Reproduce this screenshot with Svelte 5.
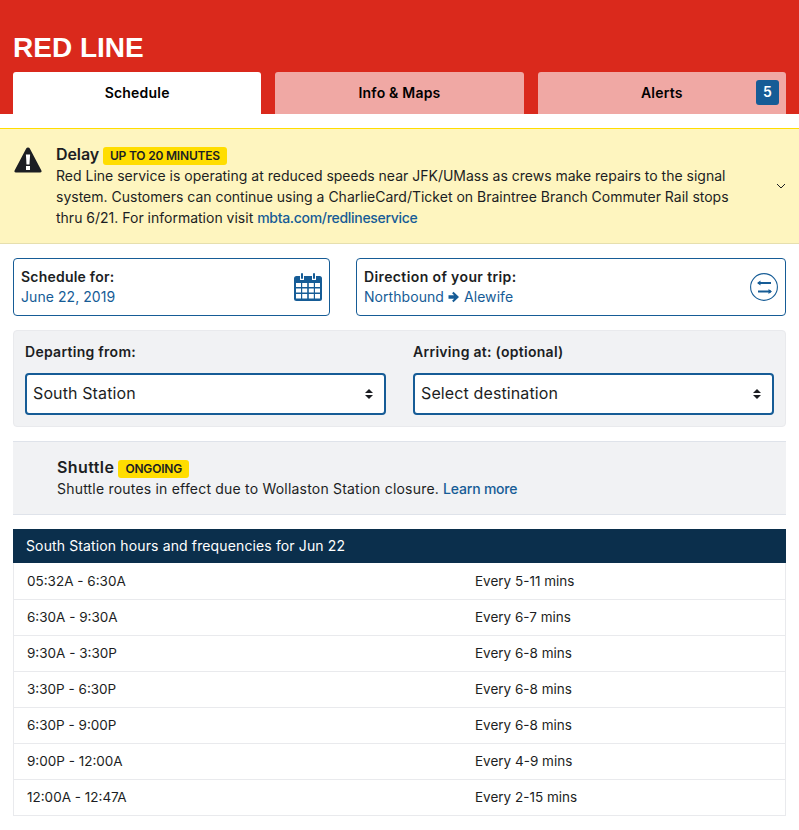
<script>
  const tabs = [
    { label: "Schedule", active: true },
    { label: "Info & Maps" },
    { label: "Alerts", badge: 5 },
  ];

  const hours = [
    ["05:32A - 6:30A", "Every 5-11 mins"],
    ["6:30A - 9:30A", "Every 6-7 mins"],
    ["9:30A - 3:30P", "Every 6-8 mins"],
    ["3:30P - 6:30P", "Every 6-8 mins"],
    ["6:30P - 9:00P", "Every 6-8 mins"],
    ["9:00P - 12:00A", "Every 4-9 mins"],
    ["12:00A - 12:47A", "Every 2-15 mins"],
  ];
</script>

<header class="header">
  <h1>RED LINE</h1>
  <nav class="tabs">
    {#each tabs as tab}
      <div class="tab" class:active={tab.active}>
        {tab.label}
        {#if tab.badge}<span class="count">{tab.badge}</span>{/if}
      </div>
    {/each}
  </nav>
</header>

<section class="alert">
  <svg class="warn" viewBox="0 0 28 28" width="28" height="28">
    <path d="M14 1.500c.8 0 1.400.4 1.800 1.100l11.600 22c.5 1-.1 2-1.200 2H1.800c-1.100 0-1.700-1-1.200-2l11.600-22c.4-.7 1-1.100 1.800-1.100z" fill="#1c1e23" />
    <path d="M11.900 8.500h4.200l-.6 10h-3z" fill="#fff" />
    <rect x="12" y="20" width="4" height="4" fill="#fff" />
  </svg>
  <div class="alert-body">
    <div class="alert-title"><strong>Delay</strong> <span class="tag">UP TO 20 MINUTES</span></div>
    <p>
      Red Line service is operating at reduced speeds near JFK/UMass as crews make repairs to the signal
      system. Customers can continue using a CharlieCard/Ticket on Braintree Branch Commuter Rail stops
      thru 6/21. For information visit <a href="#top">mbta.com/redlineservice</a>
    </p>
  </div>
  <svg class="chevron" viewBox="0 0 10 6" width="10" height="6">
    <path d="M1 1l4 4 4-4" fill="none" stroke="#1c1e23" stroke-width="1" />
  </svg>
</section>

<main class="content">
  <div class="pickers">
    <div class="picker date">
      <div>
        <div class="picker-label">Schedule for:</div>
        <div class="picker-value">June 22, 2019</div>
      </div>
      <svg viewBox="0 0 28 28" width="28" height="28">
        <rect x="0" y="3" width="28" height="25" rx="2.500" fill="#165c96" />
        <g fill="#fff">
          <rect x="2" y="10" width="5" height="4" />
          <rect x="8.200" y="10" width="5" height="4" />
          <rect x="14.800" y="10" width="5" height="4" />
          <rect x="21" y="10" width="5" height="4" />
          <rect x="2" y="15.500" width="5" height="4" />
          <rect x="8.200" y="15.500" width="5" height="4" />
          <rect x="14.800" y="15.500" width="5" height="4" />
          <rect x="21" y="15.500" width="5" height="4" />
          <rect x="2" y="21" width="5" height="4.500" />
          <rect x="8.200" y="21" width="5" height="4.500" />
          <rect x="14.800" y="21" width="5" height="4.500" />
          <rect x="21" y="21" width="5" height="4.500" />
          <rect x="6" y="3" width="4" height="4" />
          <rect x="18" y="3" width="4" height="4" />
        </g>
        <rect x="7" y="0" width="2" height="6" rx="1" fill="#165c96" />
        <rect x="19" y="0" width="2" height="6" rx="1" fill="#165c96" />
      </svg>
    </div>
    <div class="picker direction">
      <div>
        <div class="picker-label">Direction of your trip:</div>
        <div class="picker-value">
          Northbound
          <svg class="arrow" viewBox="0 0 11 12" width="12" height="12">
            <path d="M0 4.300h5.600L3.600 2.300 5 .8 10.500 6 5 11.200 3.600 9.700l2-2H0z" fill="#165c96" />
          </svg>
          Alewife
        </div>
      </div>
      <svg viewBox="0 0 28 28" width="28" height="28">
        <circle cx="14" cy="14" r="13.400" fill="none" stroke="#165c96" stroke-width="1.100" />
        <path d="M8 10h13M8 18.500h13" stroke="#165c96" stroke-width="2" />
        <path d="M10.500 7.500v5L7 10zM18.500 16v5l3.500-2.500z" fill="#165c96" />
      </svg>
    </div>
  </div>

  <div class="stops">
    <div class="stop">
      <div class="stop-label">Departing from:</div>
      <div class="select">
        South Station
        <span class="updown"></span>
      </div>
    </div>
    <div class="stop">
      <div class="stop-label">Arriving at: (optional)</div>
      <div class="select">
        Select destination
        <span class="updown"></span>
      </div>
    </div>
  </div>

  <div class="notice">
    <div class="alert-title"><strong>Shuttle</strong> <span class="tag">ONGOING</span></div>
    <p>Shuttle routes in effect due to Wollaston Station closure. <a href="#top">Learn more</a></p>
  </div>

  <div class="hours-title">South Station hours and frequencies for Jun 22</div>
  <div class="hours">
    {#each hours as row}
      <div class="row">
        <span>{row[0]}</span>
        <span>{row[1]}</span>
      </div>
    {/each}
  </div>
</main>

<style>
  :global(body) {
    font-family: Inter, "Noto Sans", sans-serif;
    font-size: 14px;
    color: #1c1e23;
    background: #fff;
  }

  .header {
    height: 114px;
    box-sizing: border-box;
    padding: 33px 13px 0;
    background: #da291c;
  }

  h1 {
    margin: 0;
    height: 39px;
    font-family: "Liberation Sans", Arial, sans-serif;
    font-size: 28px;
    line-height: 30px;
    font-weight: 700;
    color: #fff;
  }

  .tabs {
    display: flex;
    gap: 14px;
  }

  .tab {
    position: relative;
    flex: 1;
    height: 42px;
    line-height: 42px;
    text-align: center;
    font-weight: 600;
    letter-spacing: 0.2px;
    color: #000;
    background: #f0a8a4;
    border-radius: 3px 3px 0 0;
  }

  .tab.active {
    background: #fff;
  }

  .count {
    position: absolute;
    top: 8px;
    right: 7px;
    width: 23px;
    height: 25px;
    line-height: 24px;
    border-radius: 3px;
    background: #165c96;
    color: #fff;
  }

  .alert {
    display: flex;
    align-items: flex-start;
    margin-top: 14px;
    height: 116px;
    box-sizing: border-box;
    padding: 15px 13px 0 14px;
    background: #fef5bf;
    border-top: 1px solid #ffdd00;
    border-bottom: 1px solid #e6dfae;
  }

  .warn {
    flex: none;
    margin-top: 2px;
  }

  .alert-body {
    width: 680px;
    margin-left: 14px;
    line-height: 21px;
  }

  .alert-body a {
    letter-spacing: -0.3px;
  }

  .alert-title {
    height: 21px;
    line-height: 21px;
  }

  .alert-title strong {
    font-size: 16px;
    font-weight: 600;
    letter-spacing: -0.1px;
  }

  .tag {
    display: inline-block;
    padding: 0 7px;
    height: 18px;
    line-height: 18px;
    font-size: 12px;
    font-weight: 600;
    letter-spacing: -0.2px;
    border-radius: 3px;
    background: #ffdd00;
    vertical-align: 0;
  }

  p {
    margin: 0;
  }

  a {
    color: #165c96;
    text-decoration: none;
    font-weight: 500;
  }

  .chevron {
    margin: 39px 0 0 auto;
  }

  .content {
    padding: 14px 13px;
  }

  .pickers {
    display: flex;
    gap: 26px;
  }

  .picker {
    display: flex;
    align-items: center;
    justify-content: space-between;
    box-sizing: border-box;
    height: 58px;
    padding: 0 7px;
    border: 1px solid #165c96;
    border-radius: 4px;
    line-height: 20px;
  }

  .picker.date {
    width: 317px;
  }

  .picker.direction {
    flex: 1;
  }

  .picker-label {
    font-weight: 600;
    letter-spacing: 0.38px;
  }

  .date .picker-label {
    letter-spacing: 0.22px;
  }

  .picker-value {
    color: #165c96;
    letter-spacing: 0.06px;
  }

  .arrow {
    vertical-align: -1px;
  }

  .stops {
    display: flex;
    gap: 27px;
    box-sizing: border-box;
    height: 97px;
    margin-top: 14px;
    padding: 11px 11px 0;
    background: #f1f2f4;
    border: 1px solid #e9eaed;
    border-radius: 4px;
  }

  .stop {
    flex: 1;
  }

  .stop-label {
    height: 31px;
    line-height: 20px;
    font-weight: 600;
    letter-spacing: 0.28px;
  }

  .select {
    position: relative;
    box-sizing: border-box;
    height: 42px;
    line-height: 36px;
    padding-left: 6px;
    font-size: 16px;
    letter-spacing: 0.12px;
    background: #fff;
    border: 2px solid #165c96;
    border-radius: 4px;
  }

  .updown {
    position: absolute;
    right: 11px;
    top: 14px;
    width: 8px;
    height: 10px;
  }

  .updown::before,
  .updown::after {
    content: "";
    position: absolute;
    left: 0;
    border-left: 4px solid transparent;
    border-right: 4px solid transparent;
  }

  .updown::before {
    top: 0;
    border-bottom: 4px solid #1c1e23;
  }

  .updown::after {
    bottom: 0;
    border-top: 4px solid #1c1e23;
  }

  .notice {
    box-sizing: border-box;
    height: 74px;
    margin-top: 14px;
    padding: 15px 44px 0;
    line-height: 21px;
    letter-spacing: 0.2px;
    background: #f1f2f4;
    border-top: 1px solid #dfe3ea;
    border-bottom: 1px solid #dfe3ea;
  }

  .notice strong {
    letter-spacing: 0.4px;
  }

  .notice a {
    letter-spacing: -0.2px;
  }

  .hours-title {
    height: 34px;
    line-height: 34px;
    margin-top: 14px;
    padding-left: 13px;
    letter-spacing: 0.13px;
    color: #fff;
    background: #0b2f4c;
  }

  .hours {
    padding-top: 1px;
    border-left: 1px solid #e9eaed;
    border-right: 1px solid #e9eaed;
  }

  .row {
    display: grid;
    grid-template-columns: 448px 1fr;
    height: 36px;
    box-sizing: border-box;
    padding-left: 13px;
    font-size: 13.5px;
    line-height: 35px;
    border-bottom: 1px solid #e9eaed;
  }
</style>
